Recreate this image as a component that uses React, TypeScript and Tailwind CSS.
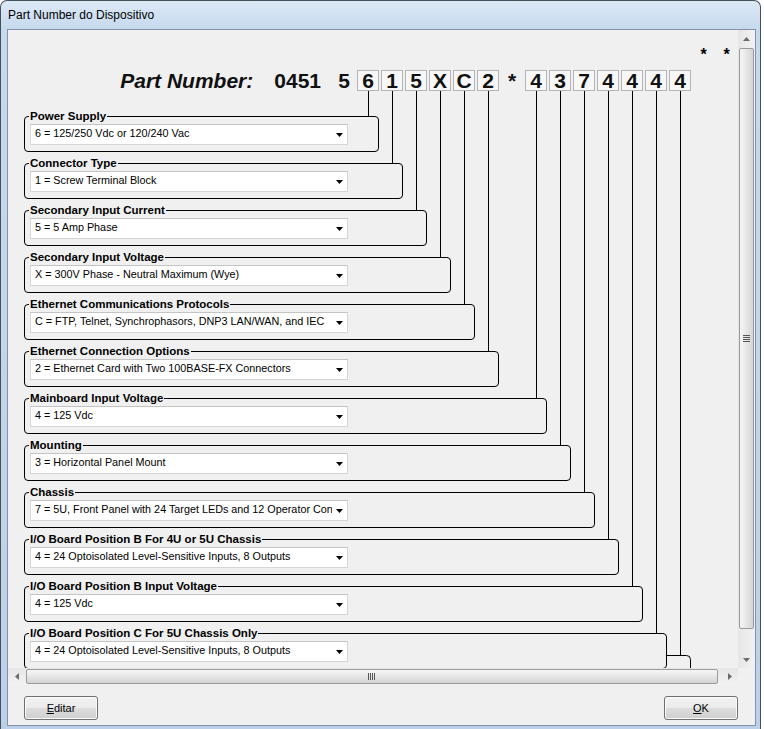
import React from 'react';

type Slot = { c: string; box: boolean };

const slots: Slot[] = [
  { c: '5', box: false },
  { c: '6', box: true },
  { c: '1', box: true },
  { c: '5', box: true },
  { c: 'X', box: true },
  { c: 'C', box: true },
  { c: '2', box: true },
  { c: '*', box: false },
  { c: '4', box: true },
  { c: '3', box: true },
  { c: '7', box: true },
  { c: '4', box: true },
  { c: '4', box: true },
  { c: '4', box: true },
  { c: '4', box: true },
];

type Group = { label: string; value: string; w: string; k: number };

const groups: Group[] = [
  { label: 'Power Supply', value: '6 = 125/250 Vdc or 120/240 Vac', w: 'w-[355px]', k: 1 },
  { label: 'Connector Type', value: '1 = Screw Terminal Block', w: 'w-[379px]', k: 2 },
  { label: 'Secondary Input Current', value: '5 = 5 Amp Phase', w: 'w-[403px]', k: 3 },
  { label: 'Secondary Input Voltage', value: 'X = 300V Phase - Neutral Maximum (Wye)', w: 'w-[427px]', k: 4 },
  { label: 'Ethernet Communications Protocols', value: 'C = FTP, Telnet, Synchrophasors, DNP3 LAN/WAN, and IEC', w: 'w-[451px]', k: 5 },
  { label: 'Ethernet Connection Options', value: '2 = Ethernet Card with Two 100BASE-FX Connectors', w: 'w-[475px]', k: 6 },
  { label: 'Mainboard Input Voltage', value: '4 = 125 Vdc', w: 'w-[523px]', k: 8 },
  { label: 'Mounting', value: '3 = Horizontal Panel Mount', w: 'w-[547px]', k: 9 },
  { label: 'Chassis', value: '7 = 5U, Front Panel with 24 Target LEDs and 12 Operator Con', w: 'w-[571px]', k: 10 },
  { label: 'I/O Board Position B For 4U or 5U Chassis', value: '4 = 24 Optoisolated Level-Sensitive Inputs, 8 Outputs', w: 'w-[595px]', k: 11 },
  { label: 'I/O Board Position B Input Voltage', value: '4 = 125 Vdc', w: 'w-[619px]', k: 12 },
  { label: 'I/O Board Position C For 5U Chassis Only', value: '4 = 24 Optoisolated Level-Sensitive Inputs, 8 Outputs', w: 'w-[643px]', k: 13 },
];

function Combo({ value }: { value: string }) {
  return (
    <div className="flex h-[21px] w-[318px] border border-[#d6d6d6] border-t-[#c4c4c4] bg-white">
      <div className="flex-1 overflow-hidden whitespace-nowrap pl-[4px] pt-[2px] text-[10.8px] leading-[13px] text-black">
        {value}
      </div>
      <div className="flex w-[15px] items-center justify-center">
        <svg width="7" height="4" viewBox="0 0 7 4">
          <polygon points="0,0 7,0 3.5,4" fill="#000" />
        </svg>
      </div>
    </div>
  );
}

function GroupBox({ g }: { g: Group }) {
  return (
    <div className={`relative h-[36px] shrink-0 rounded-[4px] border border-black pl-[5px] pt-[7px] ${g.w}`}>
      <span className="absolute left-[4px] top-[-7px] bg-[#f0f0f0] px-[1px] text-[11.5px] font-bold leading-[13px] text-black whitespace-nowrap">
        {g.label}
      </span>
      <Combo value={g.value} />
    </div>
  );
}

function WinButton({ children }: { children: React.ReactNode }) {
  return (
    <button className="flex h-[24px] w-[74px] items-center justify-center rounded-[3px] border border-[#707070] bg-[linear-gradient(to_bottom,#f2f2f2_0%,#ebebeb_50%,#dddddd_51%,#cfcfcf_100%)] text-[11px] leading-[13px] text-black shadow-[inset_0_0_0_1px_#fbfbfb]">
      {children}
    </button>
  );
}

function VScroll() {
  return (
    <div className="flex flex-col bg-[linear-gradient(to_right,#e6e6e6,#f2f2f2)]">
      <div className="flex h-[17px] items-center justify-center">
        <svg width="7" height="4" viewBox="0 0 7 4">
          <polygon points="0,4 3.5,0 7,4" fill="#6b6b6b" />
        </svg>
      </div>
      <div className="flex-1 px-[1px] pt-[1px]">
        <div className="flex h-[581px] items-center justify-center rounded-[2px] border border-[#9a9a9a] bg-[linear-gradient(to_right,#f6f6f6,#e8e8e8_45%,#d5d5d5)]">
          <svg width="7" height="8" viewBox="0 0 7 8">
            <line x1="0" x2="7" y1="0.5" y2="0.5" stroke="#555" />
            <line x1="0" x2="7" y1="2.5" y2="2.5" stroke="#555" />
            <line x1="0" x2="7" y1="4.5" y2="4.5" stroke="#555" />
            <line x1="0" x2="7" y1="6.5" y2="6.5" stroke="#555" />
          </svg>
        </div>
      </div>
      <div className="flex h-[17px] items-center justify-center">
        <svg width="7" height="4" viewBox="0 0 7 4">
          <polygon points="0,0 7,0 3.5,4" fill="#6b6b6b" />
        </svg>
      </div>
    </div>
  );
}

function HScroll() {
  return (
    <div className="flex bg-[linear-gradient(to_bottom,#e6e6e6,#f2f2f2)]">
      <div className="flex w-[17px] items-center justify-center">
        <svg width="4" height="7" viewBox="0 0 4 7">
          <polygon points="4,0 4,7 0,3.5" fill="#6b6b6b" />
        </svg>
      </div>
      <div className="flex-1 py-[1px] pl-[1px]">
        <div className="flex h-[15px] w-[692px] items-center justify-center rounded-[2px] border border-[#9a9a9a] bg-[linear-gradient(to_bottom,#f6f6f6,#e8e8e8_45%,#d3d3d3)]">
          <svg width="8" height="7" viewBox="0 0 8 7">
            <line x1="0.5" x2="0.5" y1="0" y2="7" stroke="#555" />
            <line x1="2.5" x2="2.5" y1="0" y2="7" stroke="#555" />
            <line x1="4.5" x2="4.5" y1="0" y2="7" stroke="#555" />
            <line x1="6.5" x2="6.5" y1="0" y2="7" stroke="#555" />
          </svg>
        </div>
      </div>
      <div className="flex w-[17px] items-center justify-center">
        <svg width="4" height="7" viewBox="0 0 4 7">
          <polygon points="0,0 0,7 4,3.5" fill="#6b6b6b" />
        </svg>
      </div>
    </div>
  );
}

export default function App() {
  return (
    <div className="h-[729px] w-[764px] overflow-hidden bg-white font-['Liberation_Sans',Arial,sans-serif] text-black">
      <div className="flex h-[729px] w-[761px] flex-col rounded-t-[7px] border border-b-0 border-[#46505c] bg-[linear-gradient(to_bottom,#dce9f6,#c6d9ee_28px,#bcd1e9)]">
        <div className="flex h-[28px] items-center pl-[7px] text-[12px] leading-[14px] text-black">
          Part Number do Dispositivo
        </div>
        <div className="ml-[6px] mr-[4px] flex h-[697px] flex-col border border-[#7f93ad] bg-[#f0f0f0]">
          <div className="grid grid-cols-[730px_17px] grid-rows-[638px_17px]">
            <div className="relative overflow-hidden bg-[#f0f0f0]">
              <div className="flex flex-col">
                <div className="mt-[17px] flex h-[16px] pl-[684px] text-[16px] font-bold leading-[16px]">
                  <span className="w-[24px] text-center">*</span>
                  <span className="w-[24px] text-center">*</span>
                </div>
                <div className="mt-[7px] flex h-[21px] items-start">
                  <div className="flex h-[21px] w-[324px] justify-end border border-transparent pr-[10px] text-[21px] font-bold leading-[19px] text-[#111]">
                    <span className="italic">Part Number:</span>
                    <span className="ml-[21px]">0451</span>
                  </div>
                  {slots.map((s, i) => (
                    <div key={i} className="flex w-[24px] justify-center">
                      <div
                        className={
                          s.box
                            ? 'h-[21px] w-[22px] border border-[#b4b4b4] bg-[#f7f7f7] text-center text-[21px] font-bold leading-[19px] text-[#111]'
                            : 'h-[21px] w-[22px] border border-transparent text-center text-[21px] font-bold leading-[19px] text-[#111]'
                        }
                      >
                        {s.c}
                      </div>
                    </div>
                  ))}
                </div>
                <div className="mt-[25px] flex flex-col items-start gap-[11px] pl-[16px]">
                  {groups.map((g) => (
                    <GroupBox key={g.label} g={g} />
                  ))}
                </div>
              </div>
              <svg className="pointer-events-none absolute left-0 top-0" width="730" height="638">
                {groups.map((g, i) => {
                  const x = 336 + 24 * g.k + 0.5;
                  return (
                    <line key={i} x1={x} x2={x} y1={61} y2={86 + 47 * i + 1} stroke="#000" strokeWidth="1" shapeRendering="crispEdges" />
                  );
                })}
                <line x1={672.5} x2={672.5} y1={61} y2={626} stroke="#000" strokeWidth="1" shapeRendering="crispEdges" />
                <path d="M658 625.5 H678.5 Q682.5 625.5 682.5 629.5 V640" fill="none" stroke="#000" strokeWidth="1" />
              </svg>
            </div>
            <VScroll />
            <HScroll />
            <div className="bg-[#f0f0f0]" />
          </div>
          <div className="flex h-[40px] justify-between pl-[16px] pr-[17px] pt-[11px]">
            <WinButton>
              <span className="underline underline-offset-[1px]">E</span>ditar
            </WinButton>
            <WinButton>
              <span className="underline underline-offset-[1px]">O</span>K
            </WinButton>
          </div>
        </div>
      </div>
    </div>
  );
}
